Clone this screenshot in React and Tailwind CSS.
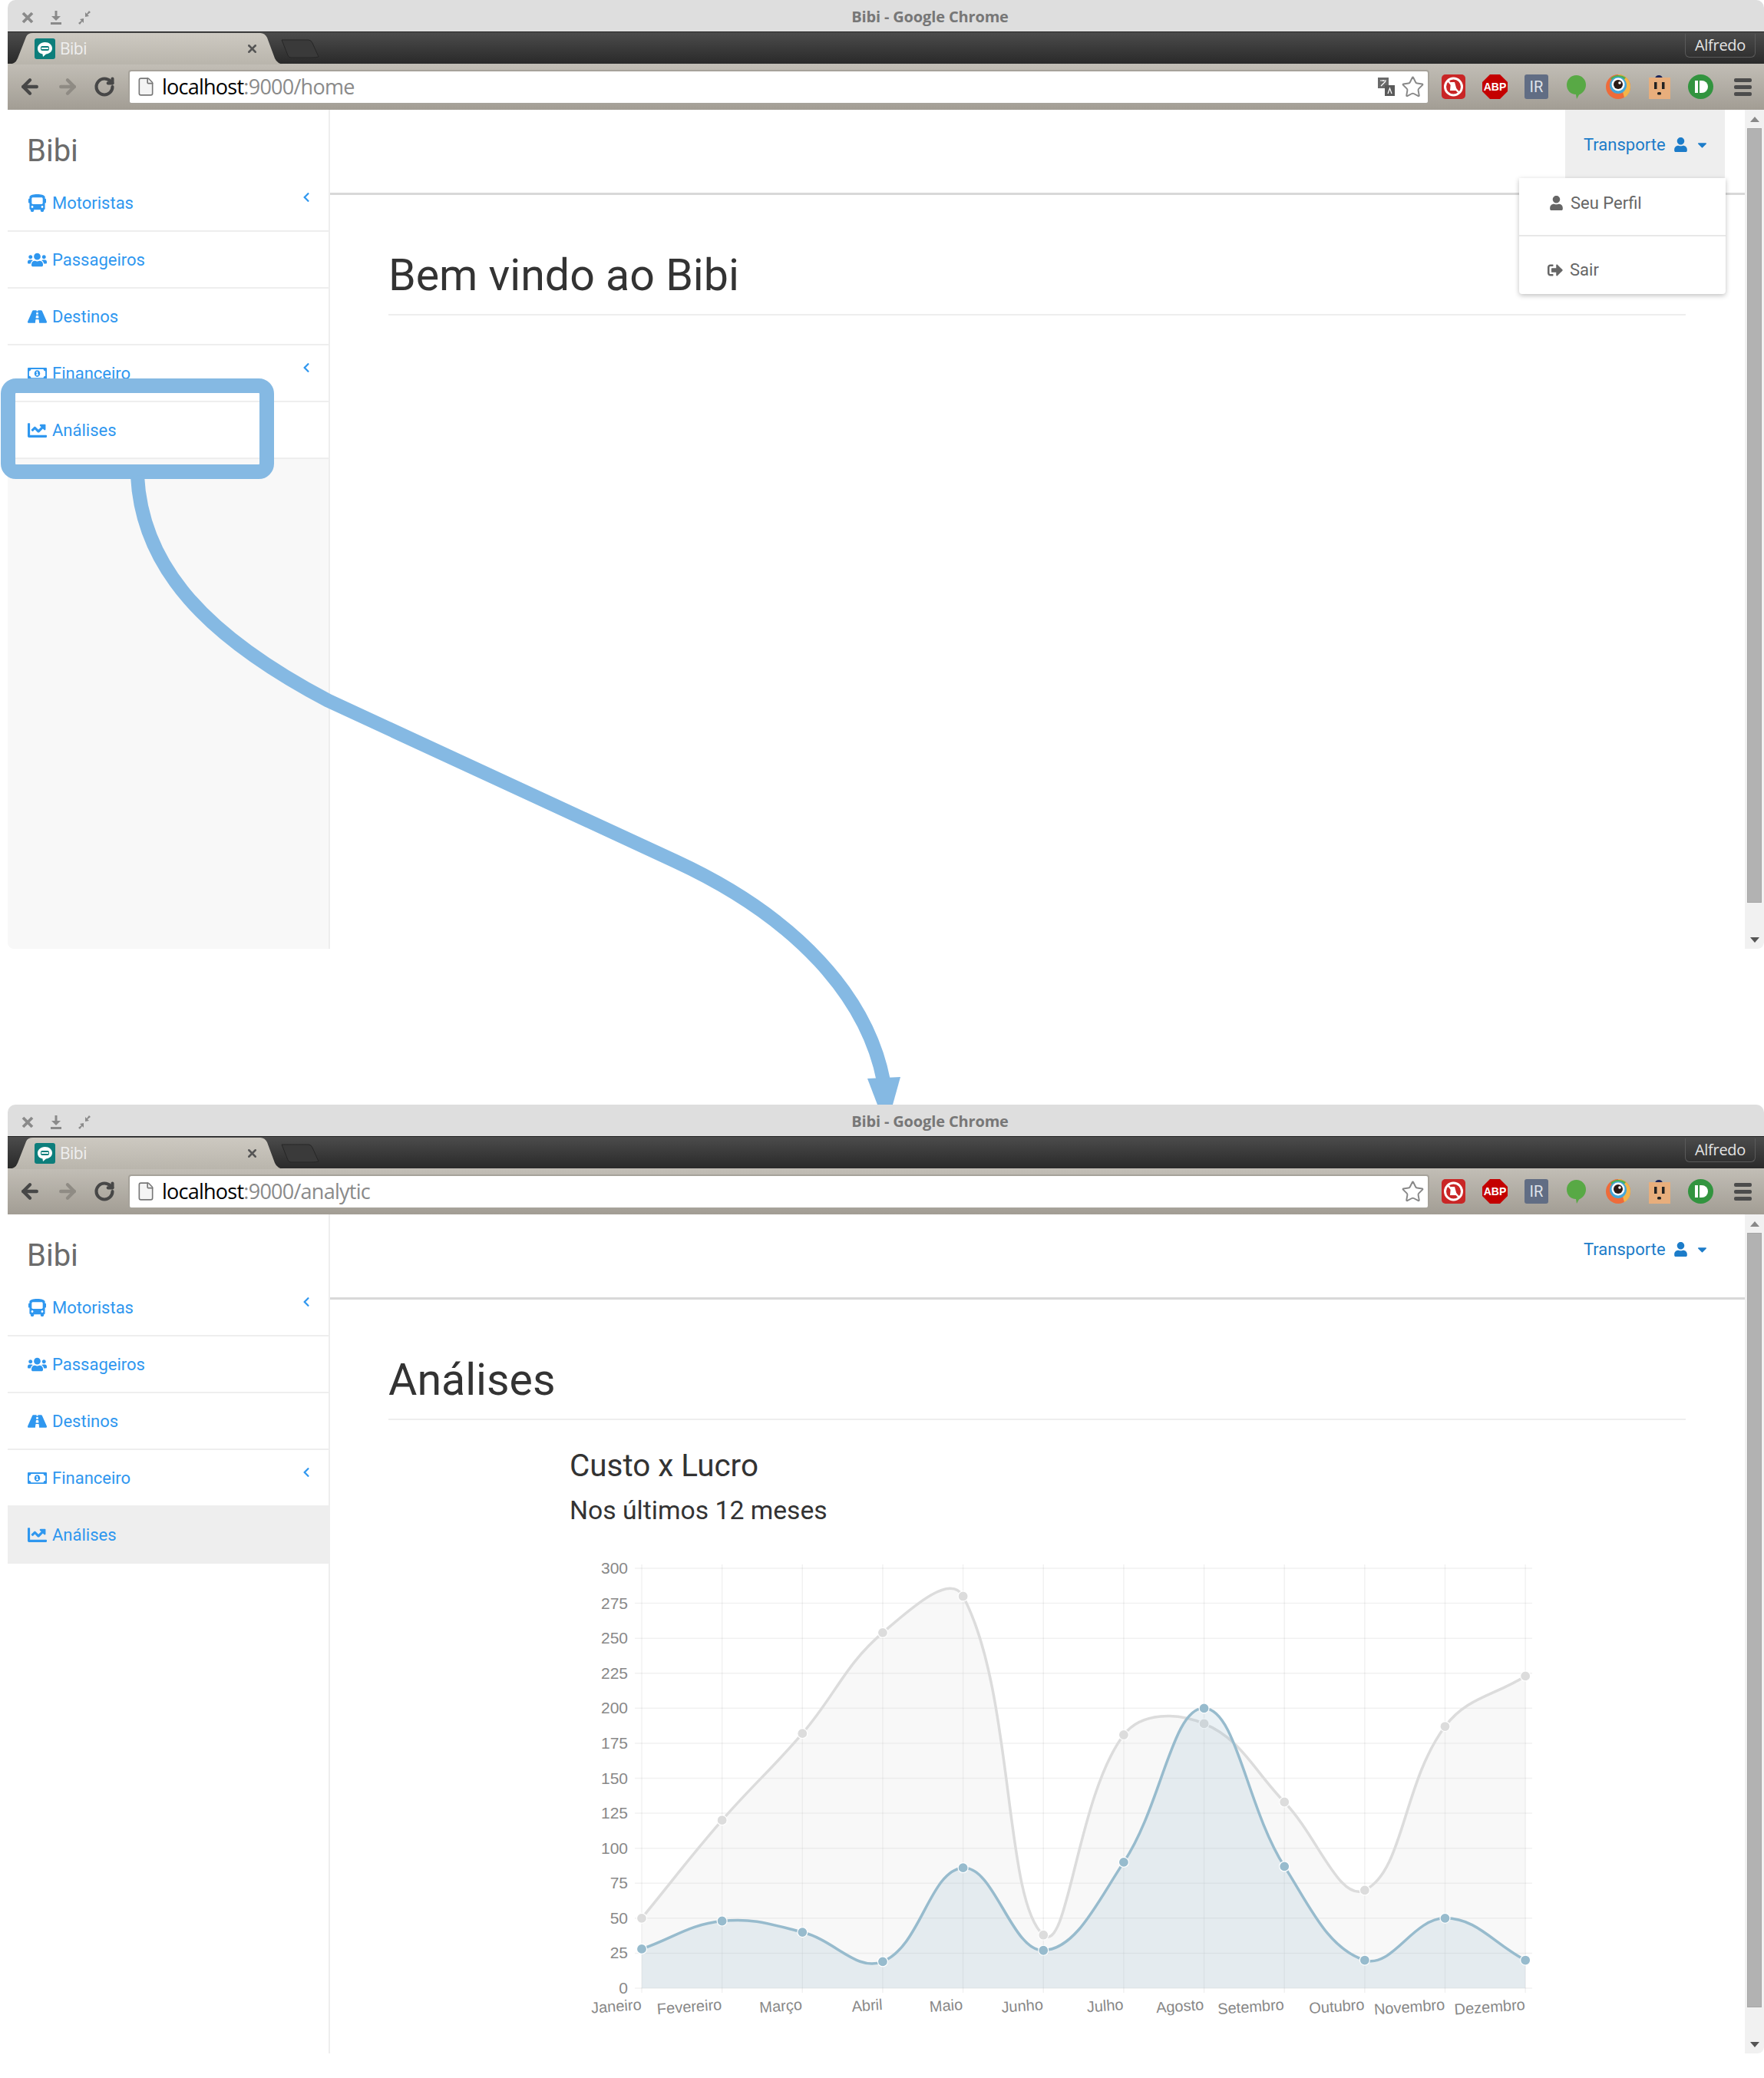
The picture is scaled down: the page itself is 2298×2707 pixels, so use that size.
import React from "react";
import { FaBus, FaUsers, FaRoad, FaRegMoneyBillAlt, FaChartLine, FaUser, FaCaretDown, FaSignOutAlt, FaChevronLeft } from "react-icons/fa";
import { ArrowLeft, ArrowRight, RotateCw, X, Star, File } from "lucide-react";

const ROBOTO = { fontFamily: "Roboto, sans-serif" };

function ExtIcons() {
  return (
    <div className="flex items-center h-full">
      <svg width="31" height="32" viewBox="0 0 31 32" className="ml-[16px]"><rect width="31" height="32" rx="5" fill="#c92626" /><circle cx="15.5" cy="16" r="11" fill="none" stroke="#fff" strokeWidth="3" /><path d="M8 8L23 24" stroke="#fff" strokeWidth="2.5" /><path d="M12 10h5l3 11h-9z" fill="#fff" /></svg>
      <svg width="33" height="32" viewBox="0 0 33 32" className="ml-[22px]"><polygon points="10,0 23,0 33,10 33,22 23,32 10,32 0,22 0,10" fill="#c40000" /><text x="16.5" y="21" textAnchor="middle" fontSize="14" fontWeight="700" fill="#fff" fontFamily="Liberation Sans, sans-serif">ABP</text></svg>
      <svg width="31" height="32" viewBox="0 0 31 32" className="ml-[22px]"><rect width="31" height="32" rx="3" fill="#616d84" /><text x="15.5" y="23" textAnchor="middle" fontSize="20" fill="#dfe3ea" fontFamily="Roboto, sans-serif">IR</text></svg>
      <svg width="25" height="31" viewBox="0 0 25 31" className="ml-[24px]"><path d="M12.5 0C19.5 0 25 5.5 25 12.5S20 24 16 25.5L13 31L12 25C5 25 0 19.5 0 12.5S5.500 0 12.500 0Z" fill="#58a945" /></svg>
      <svg width="32" height="32" viewBox="0 0 32 32" className="ml-[26px]"><circle cx="16" cy="16" r="16" fill="#ee6b3a" /><path d="M16 0A16 16 0 0 1 32 16A16 16 0 0 1 24 30Z" fill="#f3b54a" /><path d="M6 5A16 16 0 0 1 26 4L16 16Z" fill="#4caf50" /><circle cx="16" cy="14" r="11" fill="#44a6d8" /><circle cx="16" cy="13" r="8.500" fill="#fff" /><circle cx="16" cy="13" r="6" fill="#2b1b17" /><circle cx="18" cy="11" r="1.800" fill="#fff" /></svg>
      <svg width="28" height="31" viewBox="0 0 28 31" className="ml-[24px]"><path d="M8 4Q9 0 13 0T18 4Z" fill="#1c2559" /><rect y="3" width="28" height="28" fill="#e8ae7c" /><rect x="7" y="9" width="3.500" height="9" fill="#222" /><rect x="17" y="9" width="3.500" height="9" fill="#222" /><rect x="11" y="22" width="5" height="3.500" rx="1.500" fill="#222" /></svg>
      <svg width="33" height="32" viewBox="0 0 33 32" className="ml-[23px]"><ellipse cx="16.500" cy="16" rx="16.500" ry="16" fill="#32943f" /><rect x="9" y="8" width="4" height="16" fill="#fff" /><path d="M15 8h3a8 8 0 0 1 0 16h-3z" fill="#fff" /></svg>
      <div className="ml-[27px] flex flex-col gap-[4px] w-[23px]">
        <div className="h-[5px] rounded-[2px] bg-[#4c4c4c]" />
        <div className="h-[5px] rounded-[2px] bg-[#4c4c4c]" />
        <div className="h-[5px] rounded-[2px] bg-[#4c4c4c]" />
      </div>
    </div>
  );
}

function WinButtons() {
  return (
    <div className="flex items-center gap-[19px] pl-[17px] pt-[5px]">
      <svg width="18" height="18" viewBox="0 0 18 18"><path d="M3 3L15 15M15 3L3 15" stroke="#8a8a8a" strokeWidth="3.800" /></svg>
      <svg width="18" height="20" viewBox="0 0 18 20"><path d="M9 1v10" stroke="#8a8a8a" strokeWidth="3" /><path d="M3 8h12l-6 6z" fill="#8a8a8a" /><rect x="2" y="16" width="14" height="3" fill="#8a8a8a" /></svg>
      <svg width="18" height="20" viewBox="0 0 18 20"><path d="M10 9V3l2 2 3-4 2 2-4 3 2 2zM8 11v6l-2-2-3 4-2-2 4-3-2-2z" fill="#8a8a8a" /></svg>
    </div>
  );
}

function Chrome({ path, translate }) {
  return (
    <div className="shrink-0">
      <div className="relative h-[41px] rounded-t-[10px] bg-[#dedede] flex items-center">
        <WinButtons />
        <div className="absolute left-0 right-[-115px] pt-[3px] text-center text-[#777] text-[20px] font-bold tracking-[-0.15px]" style={{ fontFamily: "Open Sans, sans-serif" }}>Bibi - Google Chrome</div>
      </div>
      <div className="relative h-[42px] bg-gradient-to-b from-[#4c4c4c] to-[#2a2a2a] border-t border-[#222]">
        <svg className="absolute left-0 top-0" width="420" height="42" viewBox="0 0 420 42">
          <defs><linearGradient id={"tab" + path} x1="0" y1="0" x2="0" y2="1"><stop offset="0" stopColor="#cdc9c1" /><stop offset="1" stopColor="#b9b5ac" /></linearGradient></defs>
          <path d="M0 42Q10 42 13 34L24 6Q26 1 33 1H329Q335 1 338 7L348 34Q351 41 360 42Z" fill={"url(#tab" + path + ")"} />
          <path d="M357 10H392Q395 10 397 14L405 32Q400 33 397 33H369Q366 33 365 30Z" fill="#3a3a3a" stroke="#262626" />
        </svg>
        <svg className="absolute left-[35px] top-[8px]" width="27" height="27" viewBox="0 0 27 27"><rect width="27" height="27" rx="3" fill="#0d7e7b" /><path d="M13.500 5C19 5 23 8.500 23 13S19 20 15 20.500L11 24L10.500 20.500C6 19.500 4 17 4 13S8 5 13.500 5Z" fill="#fff" /><rect x="8" y="10" width="11" height="6" rx="2" fill="#0d7e7b" /><rect x="9" y="12" width="9" height="2" fill="#fff" /></svg>
        <span className="absolute left-[68px] top-[6px] text-[21px] text-[#efefef] tracking-[-0.5px]" style={{ fontFamily: "Open Sans, sans-serif" }}>Bibi</span>
        <X size={17} strokeWidth={3.500} className="absolute left-[310px] top-[13px] text-[#555]" />
        <div className="absolute left-[2185px] top-[2px] w-[92px] h-[31px] border border-t-0 border-[#5a5a5a] rounded-b-[6px] text-[#e4e4e4] text-[20px] text-center leading-[29px] tracking-[-0.3px]" style={{ fontFamily: "Open Sans, sans-serif" }}>Alfredo</div>
      </div>
      <div className="h-[60px] bg-gradient-to-b from-[#c2beb6] to-[#a29d94] flex items-center">
        <ArrowLeft size={30} strokeWidth={3.500} className="ml-[14px] text-[#474747]" />
        <ArrowRight size={30} strokeWidth={3.500} className="ml-[19px] text-[#8f8b84]" />
        <RotateCw size={28} strokeWidth={3.500} className="ml-[19px] text-[#474747]" />
        <div className="ml-[17px] w-[1695px] h-[45px] bg-white border-[2px] border-[#a6a29a] rounded-[4px] flex items-center">
          <File size={26} strokeWidth={1.500} className="ml-[8px] text-[#777] fill-[#f4f4f4]" />
          <span className="ml-[8px] text-[27px] tracking-[-0.75px] text-[#8a8a8a]" style={{ fontFamily: "Open Sans, sans-serif" }}>
            <span className="text-black">localhost</span>:9000/{path}
          </span>
          <div className="ml-auto flex items-center pr-[4px] gap-[8px]">
            {translate && (
              <svg width="22" height="24" viewBox="0 0 22 24"><rect width="14" height="14" fill="#6a6a6a" /><rect x="9" y="10" width="13" height="14" fill="#5a5a5a" /><path d="M3 4h8M7 3v2M4 11l6-6" stroke="#fff" strokeWidth="1.200" /><path d="M13 21l2.500-7 2.500 7" stroke="#fff" strokeWidth="1.200" fill="none" /></svg>
            )}
            <Star size={31} strokeWidth={1.500} className="text-[#888]" />
          </div>
        </div>
        <ExtIcons />
      </div>
    </div>
  );
}

const NAV = [
  { icon: FaBus, label: "Motoristas", size: 23, chev: true },
  { icon: FaUsers, label: "Passageiros", size: 27 },
  { icon: FaRoad, label: "Destinos", size: 25 },
  { icon: FaRegMoneyBillAlt, label: "Financeiro", size: 25, chev: true },
  { icon: FaChartLine, label: "Análises", size: 25 },
];

function Sidebar({ active }) {
  return (
    <div className={"w-[420px] shrink-0 border-r-[2px] border-[#eeeeee] flex flex-col " + (active ? "bg-white" : "bg-[#f8f8f8]")}>
      <div className="h-[85px] bg-white flex items-center pl-[25px] pt-[23px] text-[40px] text-[#6b6b6b]" style={ROBOTO}>Bibi</div>
      {NAV.map((n) => {
        const I = n.icon;
        return (
          <div key={n.label} className={"relative h-[74px] border-b-[2px] border-[#eeeeee] flex items-center text-[#2f97ef] text-[22px] pl-[26px] gap-[7px] " + (active && n.label === "Análises" ? "bg-[#eeeeee]" : "bg-white")} style={ROBOTO}>
            <span className="w-[25px] flex justify-center"><I size={n.size} /></span>
            <span>{n.label}</span>
            {n.chev && <FaChevronLeft size={14} className="absolute left-[382px] top-[22px]" />}
          </div>
        );
      })}
    </div>
  );
}

function Scrollbar() {
  return (
    <div className="w-[25px] shrink-0 flex flex-col items-center pt-[9px] pb-[8px] bg-[#f1f1f1] rounded-br-[8px]">
      <div className="w-0 h-0 border-x-[6px] border-x-transparent border-b-[7px] border-b-[#888]" />
      <div className="w-[19px] flex-1 bg-[#b2b2b2] border border-[#a6a6a6] mt-[8px] mb-[45px]" />
      <div className="w-0 h-0 border-x-[6px] border-x-transparent border-t-[7px] border-t-[#555]" />
    </div>
  );
}

function UserNav({ active }) {
  return (
    <div className="h-[108px] flex justify-end pr-[26px]">
      <div className={"w-[208px] h-[89px] flex items-center pl-[24px] pt-[2px] text-[#1c7cc9] text-[22px] " + (active ? "bg-[#eeeeee]" : "")} style={ROBOTO}>
        <span>Transporte</span>
        <FaUser size={19} className="ml-[10px]" />
        <FaCaretDown size={19} className="ml-[9px]" />
      </div>
    </div>
  );
}

function Dropdown() {
  return (
    <div className="absolute left-[1549px] top-[89px] w-[269px] h-[151px] bg-white rounded-b-[4px] shadow-[0_2px_6px_rgba(0,0,0,0.25)] text-[#666] text-[22px] flex flex-col" style={ROBOTO}>
      <div className="h-[76px] border-b-[2px] border-[#e8e8e8] flex items-center pl-[39px] pb-[10px] gap-[9px]">
        <FaUser size={19} /><span>Seu Perfil</span>
      </div>
      <div className="flex-1 flex items-center pl-[37px] pt-[12px] gap-[9px]">
        <FaSignOutAlt size={20} /><span>Sair</span>
      </div>
    </div>
  );
}

const GRAY = [50, 120, 182, 254, 280, 38, 181, 189, 133, 70, 187, 223];
const BLUE = [28, 48, 40, 19, 86, 27, 90, 200, 87, 20, 50, 20];
const MONTHS = ["Janeiro", "Fevereiro", "Março", "Abril", "Maio", "Junho", "Julho", "Agosto", "Setembro", "Outubro", "Novembro", "Dezembro"];
const X0 = 104;
const STEP = 104.65;
const Y0 = 587;
const UNIT = 547 / 300;
const toX = (i) => X0 + STEP * i;
const toY = (v) => Y0 - v * UNIT;

function spline(values) {
  const pts = values.map((v, i) => ({ x: toX(i), y: toY(v) }));
  const t = 0.4;
  const ctrl = pts.map((p, i) => {
    const a = pts[Math.max(i - 1, 0)];
    const b = pts[Math.min(i + 1, pts.length - 1)];
    const d1 = Math.hypot(p.x - a.x, p.y - a.y);
    const d2 = Math.hypot(b.x - p.x, b.y - p.y);
    const s = d1 + d2 || 1;
    const fa = (t * d1) / s;
    const fb = (t * d2) / s;
    return {
      in: { x: p.x - fa * (b.x - a.x), y: p.y - fa * (b.y - a.y) },
      out: { x: p.x + fb * (b.x - a.x), y: p.y + fb * (b.y - a.y) },
    };
  });
  let d = `M${pts[0].x} ${pts[0].y}`;
  for (let i = 1; i < pts.length; i++) {
    const c1 = ctrl[i - 1].out;
    const c2 = ctrl[i].in;
    d += `C${c1.x} ${c1.y} ${c2.x} ${c2.y} ${pts[i].x} ${pts[i].y}`;
  }
  return { d, pts };
}

function Chart() {
  const g = spline(GRAY);
  const b = spline(BLUE);
  const last = toX(11);
  const grid = "rgba(0,0,0,0.055)";
  const ticks = Array.from({ length: 13 }, (_, i) => i * 25);
  return (
    <svg width="1270" height="625" viewBox="0 0 1270 625" className="block" style={{ fontFamily: "Liberation Sans, sans-serif" }}>
      {ticks.map((v) => (
        <g key={v}>
          <line x1="95" x2="1264" y1={toY(v)} y2={toY(v)} stroke={grid} strokeWidth="1.500" />
          <text x="86" y={toY(v) + 7} textAnchor="end" fontSize="21" fill="#888">{v}</text>
        </g>
      ))}
      {MONTHS.map((m, i) => (
        <g key={m}>
          <line x1={toX(i)} x2={toX(i)} y1={toY(300) - 5} y2={Y0 + 6} stroke={grid} strokeWidth="1.500" />
          <text transform={`translate(${toX(i)} ${Y0 + 28}) rotate(-4)`} textAnchor="end" fontSize="20" fill="#888">{m}</text>
        </g>
      ))}
      <path d={`${g.d}L${last} ${Y0}L${X0} ${Y0}Z`} fill="rgba(220,220,220,0.2)" />
      <path d={g.d} fill="none" stroke="#dcdcdc" strokeWidth="3.500" />
      {g.pts.map((p, i) => <circle key={i} cx={p.x} cy={p.y} r="6.500" fill="#dcdcdc" stroke="#fff" strokeWidth="1.200" />)}
      <path d={`${b.d}L${last} ${Y0}L${X0} ${Y0}Z`} fill="rgba(151,187,205,0.2)" />
      <path d={b.d} fill="none" stroke="#97bbcd" strokeWidth="3.500" />
      {b.pts.map((p, i) => <circle key={i} cx={p.x} cy={p.y} r="6.500" fill="#97bbcd" stroke="#fff" strokeWidth="1.200" />)}
    </svg>
  );
}

function Window({ path, translate, children, dropdown }) {
  return (
    <div className="ml-[10px] h-[1236px] flex flex-col overflow-hidden bg-white rounded-b-[8px]">
      <Chrome path={path} translate={translate} />
      <div className="flex-1 flex min-h-0">
        <Sidebar active={!dropdown} />
        <div className="relative flex-1 flex flex-col min-w-0">
          <UserNav active={dropdown} />
          {dropdown && <Dropdown />}
          <div className="flex-1 border-t-[3px] border-[#d8d8d8] pl-[76px] pr-[77px] overflow-hidden">{children}</div>
        </div>
        <Scrollbar />
      </div>
    </div>
  );
}

function PageTitle({ children }) {
  return (
    <div className="h-[157px] border-b-[2px] border-[#eeeeee] flex items-end pb-[16px] text-[57.300px] leading-[68px] text-[#333]" style={ROBOTO}>{children}</div>
  );
}

export default function App() {
  return (
    <div className="relative w-[2298px] h-[2707px] bg-white overflow-hidden">
      <Window path="home" translate dropdown>
        <PageTitle>Bem vindo ao Bibi</PageTitle>
      </Window>
      <div className="h-[203px]" />
      <Window path="analytic">
        <PageTitle>Análises</PageTitle>
        <div className="pl-[236px] text-[#333]" style={ROBOTO}>
          <div className="mt-[38px] text-[40.400px] leading-[44px]">Custo x Lucro</div>
          <div className="mt-[16px] text-[33.700px] leading-[40px]">Nos últimos 12 meses</div>
        </div>
        <div className="ml-[226px] mt-[15px]"><Chart /></div>
      </Window>
      <div className="absolute left-[1px] top-[493px] w-[356px] h-[131px] border-[19px] border-[#85b9e3] rounded-[20px]" />
      <svg className="absolute left-0 top-0 pointer-events-none" width="2298" height="1441" viewBox="0 0 2298 1441">
        <path d="M179 620C185 740 270 830 428 913L880 1122C1040 1196 1130 1300 1151 1408" fill="none" stroke="#85b9e3" strokeWidth="18" />
        <polygon points="1130,1405 1173,1403 1163,1439 1143,1439" fill="#85b9e3" />
      </svg>
    </div>
  );
}
